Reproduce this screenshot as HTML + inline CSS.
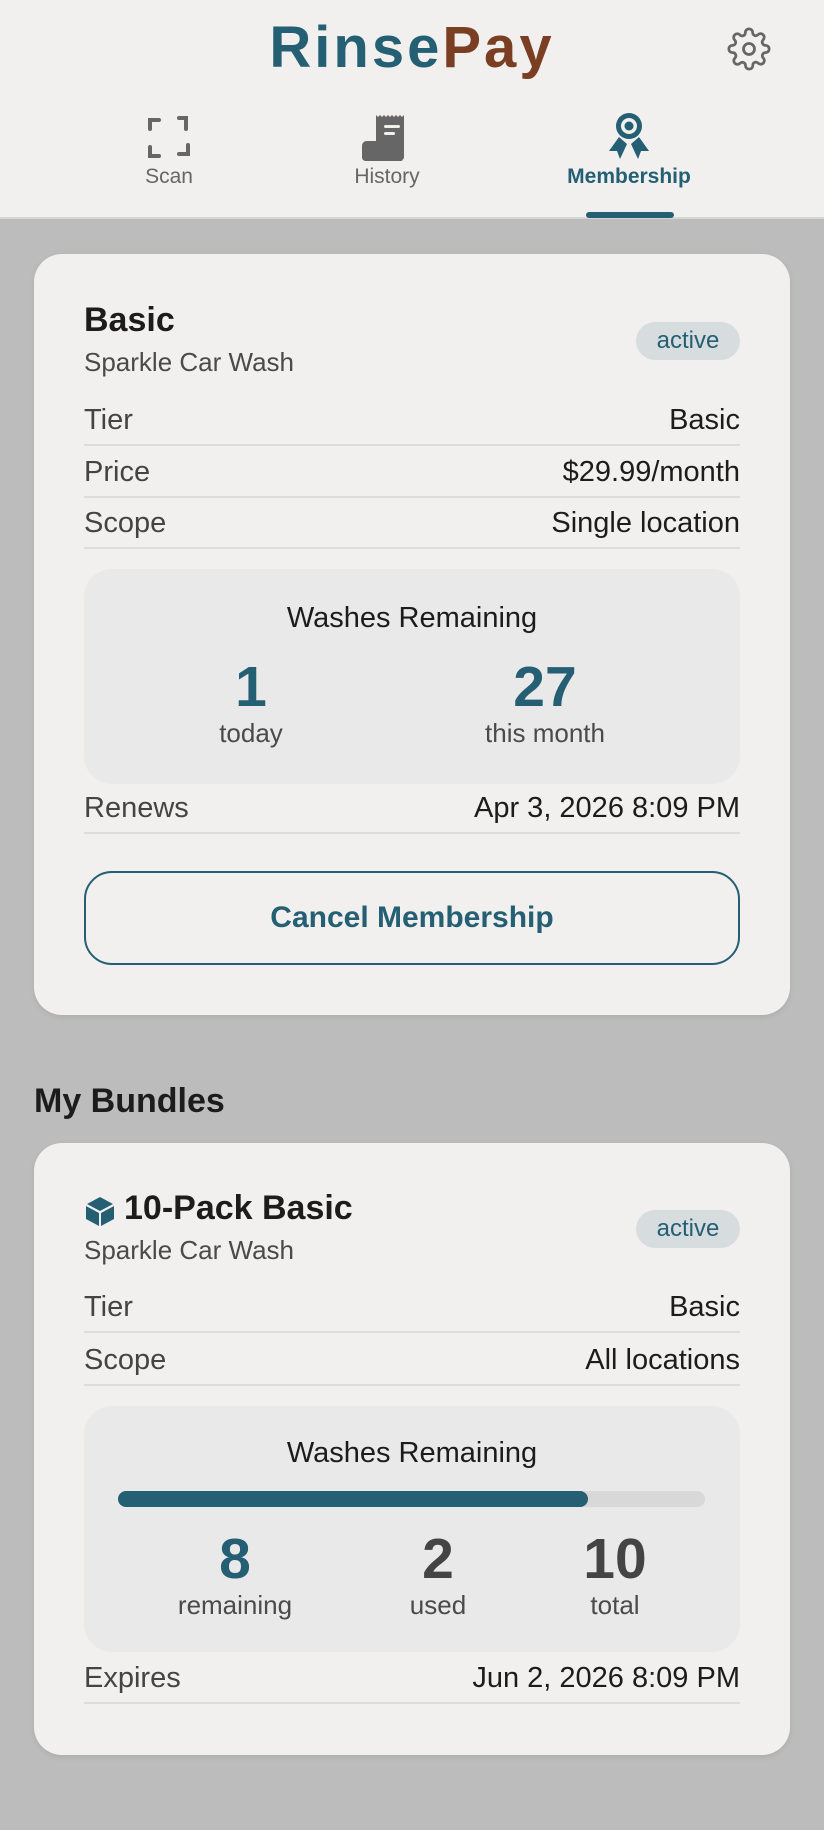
<!DOCTYPE html>
<html><head><meta charset="utf-8"><style>
*{box-sizing:border-box;margin:0;padding:0}
body{width:824px;height:1830px;background:#bbbcbb;font-family:"Liberation Sans",sans-serif;color:#1c1c1c;position:relative;overflow:hidden}
.abs{position:absolute}
header{position:absolute;left:0;top:0;width:824px;height:219px;background:#f1f0ef;border-bottom:2px solid #d6d6d5}
.logo{position:absolute;left:0;width:824px;top:14px;text-align:center;font-size:58px;font-weight:bold;letter-spacing:3px;color:#245f73}
.nav{position:absolute;top:165px;width:200px;text-align:center;font-size:21px;color:#666}
.card{position:absolute;left:34px;width:756px;background:#f1f0ef;border-radius:28px;box-shadow:0 2px 6px rgba(0,0,0,.08)}
.t{position:absolute;left:50px;font-size:34px;font-weight:bold}
.sub{position:absolute;left:50px;font-size:26px;color:#4a4a4a}
.badge{position:absolute;left:602px;width:104px;height:38px;border-radius:19px;background:#d7dcdf;color:#245f73;font-size:24px;text-align:center;line-height:38px}
.row{position:absolute;left:50px;width:656px;height:51px;border-bottom:2px solid #dcdcdb;font-size:29px;color:#444;line-height:50px}
.row span{float:right;color:#1c1c1c}
.box{position:absolute;left:50px;width:656px;background:#e9e9e9;border-radius:28px}
.wr{position:absolute;width:100%;text-align:center;font-size:29px}
.num{position:absolute;width:200px;text-align:center;font-size:57px;font-weight:bold;color:#245f73}
.lab{position:absolute;width:200px;text-align:center;font-size:26px;color:#4a4a4a}
</style></head><body>
<header>
<div class="logo">Rinse<span style="color:#7a3f22">Pay</span></div>
<svg class="abs" style="left:727px;top:27px" width="44" height="44" viewBox="0 0 24 24" fill="none" stroke="#666" stroke-width="1.5"><circle cx="12" cy="12" r="3"/><path d="M19.4 15a1.65 1.65 0 0 0 .33 1.820l.06.06a2 2 0 1 1-2.83 2.830l-.06-.06a1.65 1.65 0 0 0-1.820-.33 1.65 1.65 0 0 0-1 1.510V21a2 2 0 1 1-4 0v-.09A1.65 1.650 0 0 0 9 19.4a1.65 1.65 0 0 0-1.820.33l-.06.06a2 2 0 1 1-2.830-2.830l.06-.06A1.65 1.65 0 0 0 4.68 15a1.65 1.65 0 0 0-1.510-1H3a2 2 0 1 1 0-4h.09A1.65 1.65 0 0 0 4.6 9a1.65 1.65 0 0 0-.33-1.820l-.06-.06a2 2 0 1 1 2.830-2.830l.06.06A1.65 1.65 0 0 0 9 4.68 1.65 1.65 0 0 0 10 3.17V3a2 2 0 1 1 4 0v.09a1.65 1.65 0 0 0 1 1.510 1.65 1.65 0 0 0 1.820-.33l.06-.06a2 2 0 1 1 2.830 2.830l-.06.06A1.65 1.65 0 0 0 19.4 9a1.65 1.65 0 0 0 1.510 1H21a2 2 0 1 1 0 4h-.09a1.65 1.65 0 0 0-1.510 1z"/></svg>
<svg class="abs" style="left:147px;top:115px" width="44" height="44" viewBox="0 0 44 44" fill="none" stroke="#666" stroke-width="4" stroke-linecap="round"><path d="M3 14V5h9M32 3h7v11M41 30v9h-9M12 41H3v-9"/></svg>
<svg class="abs" style="left:362px;top:113px" width="52" height="50" viewBox="0 0 52 50" fill="#666"><path d="M14 2l2 2 2-2 2 2 2-2 2 2 2-2 2 2 2-2 2 2 2-2 2 2 2-2 2 2 2-2v42c0 3-3 4-5 3-2-1-3-3-3-5V32H14z"/><path d="M0 33c0-3 2-5 5-5h31v13c0 3 2 6 5 7H4c-2 0-4-1-4-4z"/><rect x="22" y="12" width="16" height="3" rx="1.5" fill="#f1f0ef"/><rect x="22" y="19" width="11" height="3" rx="1.5" fill="#f1f0ef"/></svg>
<svg class="abs" style="left:605px;top:111px" width="48" height="50" viewBox="0 0 48 50" fill="#245f73"><circle cx="24" cy="15" r="13"/><circle cx="24" cy="15" r="8" fill="#f1f0ef"/><circle cx="24" cy="15" r="4.5"/><path d="M14 26l-10 14h8l3 8 7-15z"/><path d="M34 26l10 14h-8l-3 8-7-15z"/></svg>
<div class="nav" style="left:69px">Scan</div>
<div class="nav" style="left:287px">History</div>
<div class="nav" style="left:529px;color:#245f73;font-weight:bold">Membership</div>
<div class="abs" style="left:586px;top:212px;width:88px;height:6px;border-radius:3px;background:#245f73"></div>
</header>

<div class="card" style="top:254px;height:761px">
<div class="t" style="top:47px">Basic</div>
<div class="sub" style="top:93px">Sparkle Car Wash</div>
<div class="badge" style="top:68px">active</div>
<div class="row" style="top:141px">Tier<span>Basic</span></div>
<div class="row" style="top:193px">Price<span>$29.99/month</span></div>
<div class="row" style="top:244px">Scope<span>Single location</span></div>
<div class="box" style="top:315px;height:215px">
<div class="wr" style="top:33px">Washes Remaining</div>
<div class="num" style="left:67px;top:85px">1</div>
<div class="lab" style="left:67px;top:149px">today</div>
<div class="num" style="left:361px;top:85px">27</div>
<div class="lab" style="left:361px;top:149px">this month</div>
</div>
<div class="row" style="top:529px">Renews<span>Apr 3, 2026 8:09 PM</span></div>
<div class="abs" style="left:50px;top:617px;width:656px;height:94px;border:2px solid #245f73;border-radius:28px;text-align:center;line-height:90px;font-size:30px;font-weight:bold;color:#245f73">Cancel Membership</div>
</div>

<div class="abs" style="left:34px;top:1082px;font-size:34px;font-weight:bold">My Bundles</div>

<div class="card" style="top:1143px;height:612px">
<svg class="abs" style="left:51px;top:53px" width="30" height="30" viewBox="0 0 30 30" fill="#245f73"><path d="M15 1l13 7-13 7L2 8z"/><path d="M1 10l13 7v13L1 23z"/><path d="M29 10l-13 7v13l13-7z"/></svg>
<div class="t" style="left:90px;top:46px">10-Pack Basic</div>
<div class="sub" style="top:92px">Sparkle Car Wash</div>
<div class="badge" style="top:67px">active</div>
<div class="row" style="top:139px">Tier<span>Basic</span></div>
<div class="row" style="top:192px">Scope<span>All locations</span></div>
<div class="box" style="top:263px;height:246px">
<div class="wr" style="top:31px">Washes Remaining</div>
<div class="abs" style="left:34px;top:85px;width:587px;height:16px;border-radius:8px;background:#d8d8d8"><div style="width:470px;height:16px;border-radius:8px;background:#245f73"></div></div>
<div class="num" style="left:51px;top:120px">8</div>
<div class="lab" style="left:51px;top:184px">remaining</div>
<div class="num" style="left:254px;top:120px;color:#444">2</div>
<div class="lab" style="left:254px;top:184px">used</div>
<div class="num" style="left:431px;top:120px;color:#444">10</div>
<div class="lab" style="left:431px;top:184px">total</div>
</div>
<div class="row" style="top:510px">Expires<span>Jun 2, 2026 8:09 PM</span></div>
</div>
</body></html>
